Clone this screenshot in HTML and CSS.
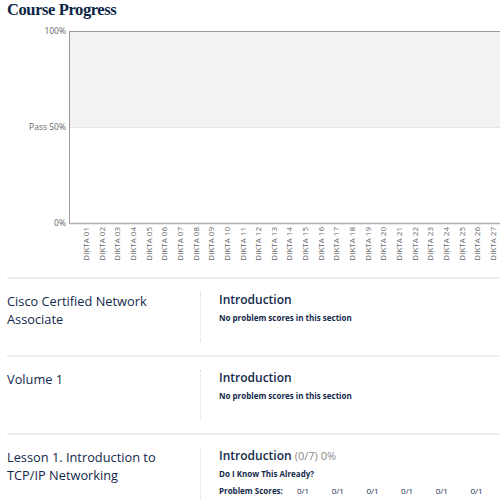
FILE: index.html
```html
<!DOCTYPE html>
<html lang="en">
<head>
    <meta charset="UTF-8">
    <title>Course Progress</title>
    <link rel="stylesheet" href="styles.css">
</head>
<body>
    <div class="page">
        <h1 class="title">Course Progress</h1>

        <svg class="chart" width="500" height="250" viewBox="0 0 500 250">
            <rect x="69" y="9" width="431" height="96" fill="#f2f2f2"></rect>
            <line x1="69" y1="105.5" x2="500" y2="105.5" stroke="#e4e4e4" stroke-width="1"></line>
            <line x1="69" y1="9.5" x2="500" y2="9.5" stroke="#9a9a9a" stroke-width="1"></line>
            <line x1="69.5" y1="9" x2="69.5" y2="202" stroke="#9a9a9a" stroke-width="1"></line>
            <line x1="69" y1="201.5" x2="500" y2="201.5" stroke="#b0b0b0" stroke-width="1.5"></line>
            <g class="y-labels">
                <text x="66" y="12">100%</text>
                <text x="66" y="108">Pass 50%</text>
                <text x="66" y="204">0%</text>
            </g>
            <g class="x-labels" id="x-labels"></g>
        </svg>

        <div class="section">
            <div class="chapter">Cisco Certified Network Associate</div>
            <div class="detail">
                <div class="subsection">Introduction</div>
                <div class="note">No problem scores in this section</div>
            </div>
        </div>

        <div class="section">
            <div class="chapter">Volume 1</div>
            <div class="detail">
                <div class="subsection">Introduction</div>
                <div class="note">No problem scores in this section</div>
            </div>
        </div>

        <div class="section">
            <div class="chapter">Lesson 1. Introduction to TCP/IP Networking</div>
            <div class="detail">
                <div class="subsection">Introduction <span class="score">(0/7) 0%</span></div>
                <div class="note">Do I Know This Already?</div>
                <div class="scores">
                    <span class="scores-label">Problem Scores:</span>
                    <span class="problem">0/1</span>
                    <span class="problem">0/1</span>
                    <span class="problem">0/1</span>
                    <span class="problem">0/1</span>
                    <span class="problem">0/1</span>
                    <span class="problem">0/1</span>
                </div>
            </div>
        </div>
    </div>

    <script>
        // x axis labels, one per dikta
        const labels = document.getElementById('x-labels');
        for (let i = 0; i < 27; i++) {
            const x = 89 + i * 15.65;
            const t = document.createElementNS('http://www.w3.org/2000/svg', 'text');
            t.setAttribute('transform', 'translate(' + x + ',205) rotate(-90)');
            t.textContent = 'DIKTA ' + String(i + 1).padStart(2, '0');
            labels.appendChild(t);
        }
    </script>
</body>
</html>
```
FILE: styles.css
```css
body {
    margin: 0;
    padding: 0;
    background-color: #fff;
    color: #13294b;
    font-family: 'Open Sans', 'Noto Sans', sans-serif;
}

.page {
    padding-left: 7px;
    overflow: hidden;
}

.title {
    margin: 0;
    height: 22px;
    font-family: 'Liberation Serif', serif;
    font-size: 16.5px;
    letter-spacing: -0.4px;
    line-height: 20px;
    font-weight: bold;
    color: #0b2545;
}

.chart {
    display: block;
    margin-left: -7px;
}

.y-labels text {
    font-size: 8.5px;
    fill: #666;
    text-anchor: end;
}

.x-labels text {
    font-size: 8px;
    fill: #666;
    text-anchor: end;
}

.section {
    display: flex;
    margin-top: 5px;
    padding: 13px 0;
    border-top: 2px solid #eeeeee;
}

.section + .section {
    margin-top: 0;
}

.chapter {
    box-sizing: border-box;
    flex-shrink: 0;
    width: 194px;
    min-height: 50px;
    padding-right: 28px;
    border-right: 1px dotted #d6d6d6;
    font-size: 12.8px;
    line-height: 18px;
}

.detail {
    padding-left: 18px;
    white-space: nowrap;
}

.subsection {
    font-size: 12px;
    font-weight: 600;
    line-height: 16px;
}

.score {
    font-size: 11px;
    font-weight: normal;
    color: #8a8a8a;
}

.note {
    margin-top: 2px;
    font-size: 8px;
    font-weight: bold;
    line-height: 16px;
}

.scores {
    display: flex;
    margin-top: 1px;
    font-size: 8px;
    line-height: 16px;
}

.scores-label {
    width: 78px;
    font-weight: bold;
}

.problem {
    width: 34.7px;
}
```
